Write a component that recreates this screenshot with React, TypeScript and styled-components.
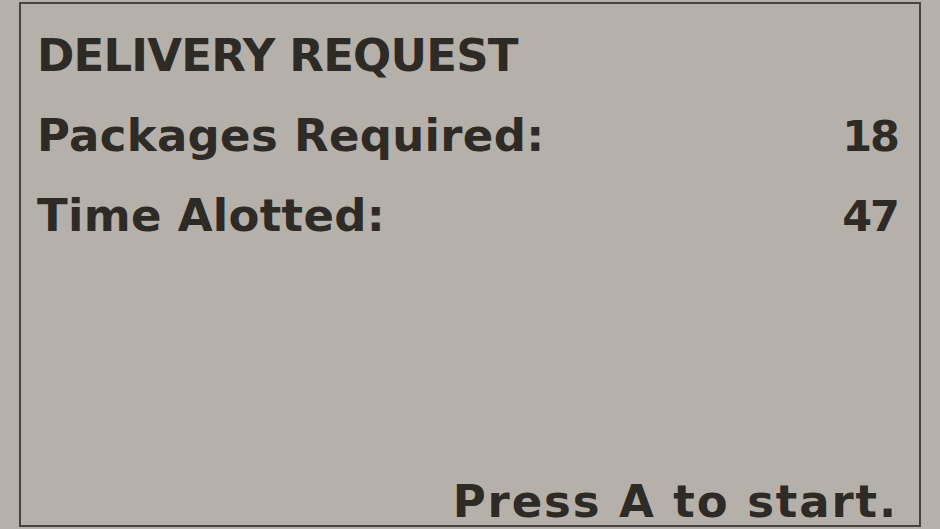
import React from "react";
import styled, { createGlobalStyle } from "styled-components";

const GlobalStyle = createGlobalStyle`
  html, body {
    margin: 0;
    padding: 0;
    background: #b5b1aa;
  }
`;

const INK = "#2e2a25";

interface StatRow {
  label: string;
  value: number;
}

const stats: StatRow[] = [
  { label: "Packages Required:", value: 18 },
  { label: "Time Alotted:", value: 47 },
];

export default function App() {
  return (
    <>
      <GlobalStyle />
      <Screen>
        <Panel>
          <Title>DELIVERY REQUEST</Title>
          {stats.map((s) => (
            <Row key={s.label}>
              <Label>{s.label}</Label>
              <Value>{s.value}</Value>
            </Row>
          ))}
          <Prompt>Press A to start.</Prompt>
        </Panel>
      </Screen>
    </>
  );
}

const Screen = styled.div`
  width: 940px;
  height: 529px;
  box-sizing: border-box;
  padding: 2px 19px 2px 19px;
  background: #b5b1aa;
  display: flex;
`;

const Panel = styled.div`
  flex: 1;
  display: flex;
  flex-direction: column;
  box-sizing: border-box;
  border: 2px solid #47433d;
  padding: 12px 21px 1px 16px;
  font-family: "DejaVu Sans", "Liberation Sans", sans-serif;
  font-weight: bold;
  font-size: 45px;
  color: ${INK};
`;

const Title = styled.div`
  line-height: 80px;
  letter-spacing: -0.8px;
`;

const Row = styled.div`
  display: flex;
  justify-content: space-between;
  line-height: 80px;
`;

const Label = styled.span`
  letter-spacing: 0.3px;
`;

const Value = styled.span`
  letter-spacing: -2px;
  font-size: 43px;
`;

const Prompt = styled.div`
  margin-top: auto;
  align-self: flex-end;
  line-height: 45px;
  letter-spacing: 1.9px;
`;
